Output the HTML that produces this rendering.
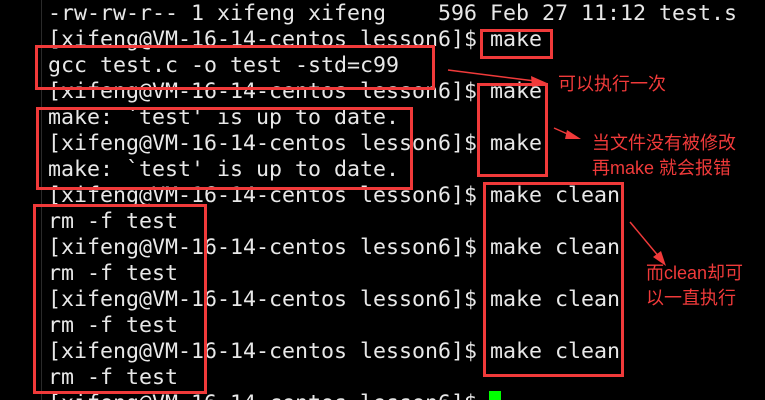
<!DOCTYPE html>
<html><head><meta charset="utf-8"><style>
html,body{margin:0;width:765px;height:400px;background:#000;overflow:hidden}
body{position:relative}
.term{position:absolute;left:48px;top:1px;font-family:"DejaVu Sans Mono","Liberation Mono",monospace;font-size:21.6px;line-height:26px;color:#e8e8e8;white-space:pre}
.vl{position:absolute;left:41px;top:0;width:1px;height:400px;background:#2a2a2a}
.b{position:absolute;border:3px solid #f03a3a;box-sizing:border-box}
.t{position:absolute;color:#f03a3a;font-family:"Liberation Sans","Noto Sans CJK SC",sans-serif;font-size:18px;line-height:25px;white-space:nowrap}
.cur{position:absolute;left:489px;top:391px;width:12px;height:9px;background:#00ff00}
</style></head><body>
<div class="vl"></div>
<div class="term">-rw-rw-r-- 1 xifeng xifeng    596 Feb 27 11:12 test.s
[xifeng@VM-16-14-centos lesson6]$ make
gcc test.c -o test -std=c99
[xifeng@VM-16-14-centos lesson6]$ make
make: `test' is up to date.
[xifeng@VM-16-14-centos lesson6]$ make
make: `test' is up to date.
[xifeng@VM-16-14-centos lesson6]$ make clean
rm -f test
[xifeng@VM-16-14-centos lesson6]$ make clean
rm -f test
[xifeng@VM-16-14-centos lesson6]$ make clean
rm -f test
[xifeng@VM-16-14-centos lesson6]$ make clean
rm -f test
[xifeng@VM-16-14-centos lesson6]$ </div>
<div class="cur"></div>
<div class="b" style="left:35px;top:45px;width:400px;height:45px"></div>
<div class="b" style="left:36px;top:107px;width:377px;height:83px"></div>
<div class="b" style="left:480px;top:29px;width:73px;height:30px"></div>
<div class="b" style="left:477px;top:83px;width:71px;height:94px"></div>
<div class="b" style="left:483px;top:182px;width:141px;height:195px"></div>
<div class="b" style="left:33px;top:204px;width:174px;height:190px"></div>
<svg width="765" height="400" style="position:absolute;left:0;top:0">
<g fill="#f03a3a" stroke="#f03a3a">
<line x1="448" y1="70" x2="535" y2="81" stroke-width="1.5"/>
<polygon points="547,83 531,76 532,87" stroke="none"/>
<line x1="554" y1="128" x2="572" y2="136" stroke-width="1.5"/>
<polygon points="581,139 567,130 565,139" stroke="none"/>
<line x1="630" y1="222" x2="660" y2="258" stroke-width="1.5"/>
<polygon points="666,266 653,257 661,251" stroke="none"/>
</g></svg>
<div class="t" style="left:558px;top:72px">可以执行一次</div>
<div class="t" style="left:592px;top:131px">当文件没有被修改<br>再make 就会报错</div>
<div class="t" style="left:646px;top:261px">而clean却可<br>以一直执行</div>
</body></html>
